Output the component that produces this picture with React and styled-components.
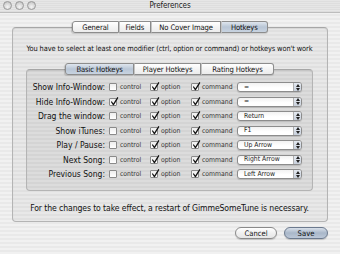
import React from "react";
import styled, { createGlobalStyle } from "styled-components";

const GlobalStyle = createGlobalStyle`
  html, body { margin: 0; padding: 0; }
  body { background: #ececec; font-family: "DejaVu Sans", "Liberation Sans", sans-serif; }
`;

const Window = styled.div`
  width: 340px;
  height: 254px;
  overflow: hidden;
  display: flex;
  flex-direction: column;
  background: repeating-linear-gradient(to bottom, #f1f1f1 0px, #f1f1f1 2px, #e9e9e9 2px, #e9e9e9 4px);
  font-family: "DejaVu Sans", "Liberation Sans", sans-serif;
  font-stretch: semi-condensed;
  color: #111;
`;

const TitleBar = styled.div`
  height: 13px;
  flex: none;
  position: relative;
  display: flex;
  align-items: center;
  justify-content: center;
  background: repeating-linear-gradient(to bottom, #e6e6e6 0px, #e6e6e6 1px, #dedede 1px, #dedede 2px);
  border-bottom: 1px solid #bdbdbd;
  box-sizing: border-box;
`;

const Lights = styled.div`
  position: absolute;
  left: 3px;
  top: 1px;
  display: flex;
  gap: 3px;
`;

const Light = styled.span`
  width: 9px;
  height: 9px;
  border-radius: 50%;
  box-sizing: border-box;
  border: 1px solid #9a9a9a;
  background: radial-gradient(circle at 50% 70%, #f4f4f4 0%, #d4d4d4 60%, #b8b8b8 100%);
`;

const Title = styled.div`
  font-size: 8px;
  letter-spacing: -0.1px;
  color: #222;
  line-height: 1;
`;

const Body = styled.div`
  flex: 1;
  display: flex;
  flex-direction: column;
  padding: 8px 12px 0 12px;
`;

const TabBar = styled.div`
  display: flex;
  justify-content: center;
  position: relative;
  z-index: 1;
  margin-bottom: -6px;
  padding-left: ${(p) => p.$shift || 0}px;
`;

const Tab = styled.div`
  height: 12px;
  box-sizing: border-box;
  padding: 0 ${(p) => p.$pad}px;
  display: flex;
  align-items: center;
  font-size: 7.6px;
  letter-spacing: -0.1px;
  border: 1px solid #8d8d8d;
  border-left-width: ${(p) => (p.$first ? 1 : 0)}px;
  border-radius: ${(p) => (p.$first ? "3px 0 0 3px" : p.$last ? "0 3px 3px 0" : "0")};
  background: ${(p) =>
    p.$active
      ? "linear-gradient(to bottom, #dfe6ee 0%, #b9c6d6 50%, #c8d3e0 100%)"
      : "linear-gradient(to bottom, #ffffff 0%, #f4f4f4 50%, #ececec 100%)"};
  box-shadow: ${(p) => (p.$first ? "-1px 1px 1px rgba(0,0,0,0.15)" : "0 1px 1px rgba(0,0,0,0.12)")};
  & + & { border-left: 1px solid #c4c4c4; }
`;

const GroupBox = styled.div`
  box-sizing: border-box;
  border: 1px solid #b4b4b4;
  border-top-color: #a6a6a6;
  border-radius: 4px;
  background: ${(p) => p.$bg};
  box-shadow: inset 0 1px 1px rgba(0,0,0,0.08);
  display: flex;
  flex-direction: column;
`;

const OuterBox = styled(GroupBox)`
  height: 195px;
  padding: 16px 14px 0 13px;
`;

const Notice = styled.div`
  font-size: 7.4px;
  letter-spacing: -0.1px;
  text-align: center;
  line-height: 10px;
  height: 10px;
  white-space: nowrap;
  margin-left: -8px;
  margin-right: -8px;
`;

const InnerWrap = styled.div`
  margin-top: 9px;
  display: flex;
  flex-direction: column;
`;

const InnerBox = styled(GroupBox)`
  height: 122px;
  padding: 10px 0 0 3px;
`;

const Grid = styled.div`
  display: grid;
  grid-template-columns: 79px 41px 41px 46px 65px;
  grid-auto-rows: 14.5px;
  align-items: center;
`;

const Label = styled.div`
  font-size: 8.5px;
  text-align: right;
  padding-right: 4px;
  white-space: nowrap;
  margin-left: -6px;
`;

const CheckItem = styled.div`
  display: flex;
  align-items: center;
  gap: 3px;
  font-size: 6.8px;
  color: #333;
`;

const Box = styled.span`
  position: relative;
  width: 8px;
  height: 8px;
  box-sizing: border-box;
  border: 1px solid #8a8a8a;
  border-radius: 1px;
  background: linear-gradient(to bottom, #eeeeee, #ffffff);
  flex: none;
`;

const Mark = styled.svg`
  position: absolute;
  left: 0px;
  top: -2px;
  overflow: visible;
`;

const Popup = styled.div`
  width: 65px;
  height: 10px;
  box-sizing: border-box;
  border: 1px solid #8c8c8c;
  border-radius: 3px;
  background: linear-gradient(to bottom, #f2f2f2, #ffffff 60%);
  display: flex;
  align-items: center;
  font-size: 6.8px;
  position: relative;
  box-shadow: 0 1px 1px rgba(0,0,0,0.15);
`;

const PopupText = styled.span`
  flex: 1;
  padding-left: 6px;
  color: #222;
  line-height: 1;
`;

const Stepper = styled.span`
  width: 7px;
  height: 100%;
  border-left: 1px solid #b0b0b0;
  background: linear-gradient(to bottom, #e4e9f0, #c8d0dc);
  border-radius: 0 2px 2px 0;
  display: flex;
  align-items: center;
  justify-content: center;
`;

const Footer = styled.div`
  margin-top: 12px;
  font-size: 8.6px;
  letter-spacing: -0.1px;
  text-align: center;
  line-height: 10px;
  white-space: nowrap;
  margin-left: -6px;
  margin-right: -6px;
`;

const Buttons = styled.div`
  display: flex;
  justify-content: flex-end;
  gap: 7px;
  margin-top: 5px;
`;

const Button = styled.div`
  width: ${(p) => p.$w}px;
  height: 12px;
  box-sizing: border-box;
  border-radius: 6px;
  border: 1px solid ${(p) => (p.$default ? "#6c7a8e" : "#8a8a8a")};
  background: ${(p) =>
    p.$default
      ? "linear-gradient(to bottom, #d8e0ea 0%, #a9b7c9 50%, #bcc8d8 100%)"
      : "linear-gradient(to bottom, #ffffff 0%, #f0f0f0 50%, #e6e6e6 100%)"};
  display: flex;
  align-items: center;
  justify-content: center;
  font-size: 7.6px;
  box-shadow: 0 1px 1px rgba(0,0,0,0.18);
`;

function Check({ checked, text }) {
  return (
    <CheckItem>
      <Box>
        {checked && (
          <Mark width="9" height="9" viewBox="0 0 9 9">
            <path d="M1.6 5 L3.4 7.6 L7.6 0.8" fill="none" stroke="#111" strokeWidth="1.3" strokeLinecap="round" strokeLinejoin="round" />
          </Mark>
        )}
      </Box>
      {text}
    </CheckItem>
  );
}

function Select({ value }) {
  return (
    <Popup>
      <PopupText>{value}</PopupText>
      <Stepper>
        <svg width="4" height="7" viewBox="0 0 4 7">
          <path d="M0 3 L2 0 L4 3 Z M0 4 L2 7 L4 4 Z" fill="#222" />
        </svg>
      </Stepper>
    </Popup>
  );
}

const rows = [
  ["Show Info-Window:", false, "="],
  ["Hide Info-Window:", true, "="],
  ["Drag the window:", false, "Return"],
  ["Show iTunes:", false, "F1"],
  ["Play / Pause:", false, "Up Arrow"],
  ["Next Song:", false, "Right Arrow"],
  ["Previous Song:", false, "Left Arrow"],
];

export default function App() {
  return (
    <>
      <GlobalStyle />
      <Window>
        <TitleBar>
          <Lights>
            <Light />
            <Light />
            <Light />
          </Lights>
          <Title>Preferences</Title>
        </TitleBar>
        <Body>
          <TabBar $shift={0}>
            <Tab $first $pad={9}>General</Tab>
            <Tab $pad={6}>Fields</Tab>
            <Tab $pad={7}>No Cover Image</Tab>
            <Tab $last $active $pad={9}>Hotkeys</Tab>
          </TabBar>
          <OuterBox $bg="rgba(0,0,0,0.035)">
            <Notice>You have to select at least one modifier (ctrl, option or command) or hotkeys won't work</Notice>
            <InnerWrap>
              <TabBar $shift={0}>
                <Tab $first $active $pad={10}>Basic Hotkeys</Tab>
                <Tab $pad={8}>Player Hotkeys</Tab>
                <Tab $last $pad={10}>Rating Hotkeys</Tab>
              </TabBar>
              <InnerBox $bg="rgba(0,0,0,0.05)">
                <Grid>
                  {rows.map(([label, ctrl, key]) => (
                    <React.Fragment key={label}>
                      <Label>{label}</Label>
                      <Check checked={ctrl} text="control" />
                      <Check checked text="option" />
                      <Check checked text="command" />
                      <Select value={key} />
                    </React.Fragment>
                  ))}
                </Grid>
              </InnerBox>
            </InnerWrap>
            <Footer>For the changes to take effect, a restart of GimmeSomeTune is necessary.</Footer>
          </OuterBox>
          <Buttons>
            <Button $w={42}>Cancel</Button>
            <Button $w={44} $default>Save</Button>
          </Buttons>
        </Body>
      </Window>
    </>
  );
}
